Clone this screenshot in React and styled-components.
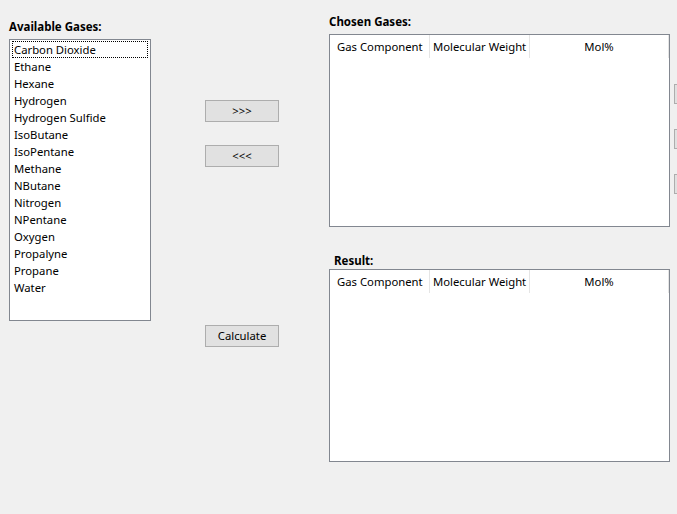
import React from 'react';
import styled, { createGlobalStyle } from 'styled-components';

const GlobalStyle = createGlobalStyle`
  html, body {
    margin: 0;
    padding: 0;
    background: #f0f0f0;
  }
  body {
    font-family: 'Noto Sans', 'Liberation Sans', sans-serif;
    font-size: 11.3px;
    color: #000;
  }
`;

const Window = styled.div`
  width: 677px;
  height: 514px;
  overflow: hidden;
  display: flex;
  align-items: flex-start;
  background: #f0f0f0;
`;

const LeftColumn = styled.div`
  display: flex;
  flex-direction: column;
  padding: 19px 0 0 9px;
  width: 142px;
  flex-shrink: 0;
`;

const MiddleColumn = styled.div`
  display: flex;
  flex-direction: column;
  margin-left: 54px;
  padding-top: 100px;
  width: 74px;
  flex-shrink: 0;
`;

const RightColumn = styled.div`
  display: flex;
  flex-direction: column;
  margin-left: 50px;
  padding-top: 14px;
  flex-shrink: 0;
`;

const Label = styled.div`
  font-weight: bold;
  font-size: 11.5px;
  height: 15px;
  line-height: 15px;
  margin-left: ${({ indent }) => indent || 0}px;
  margin-bottom: ${({ gap }) => gap || 5}px;
  white-space: nowrap;
`;

const ListBox = styled.div`
  box-sizing: border-box;
  width: 142px;
  height: 282px;
  background: #fff;
  border: 1px solid #828790;
  padding: 1px 2px;
`;

const ListItem = styled.div`
  box-sizing: border-box;
  height: 17px;
  line-height: 16px;
  padding-left: 1px;
  white-space: nowrap;
  border: 1px dotted ${({ focused }) => (focused ? '#000' : 'transparent')};
`;

const Button = styled.button`
  box-sizing: border-box;
  width: 74px;
  height: 22px;
  margin: 0 0 ${({ after }) => after || 0}px 0;
  padding: 0;
  background: #e1e1e1;
  border: 1px solid #adadad;
  border-radius: 0;
  font-family: 'Noto Sans', 'Liberation Sans', sans-serif;
  font-size: 11.3px;
  color: #000;
  line-height: 20px;
`;

const ViewRow = styled.div`
  display: flex;
  align-items: flex-start;
  gap: 4px;
`;

const ListView = styled.div`
  box-sizing: border-box;
  width: 341px;
  height: 193px;
  background: #fff;
  border: 1px solid #828790;
  flex-shrink: 0;
`;

const Header = styled.div`
  display: flex;
  height: 23px;
`;

const HeaderCell = styled.div`
  box-sizing: border-box;
  width: ${({ w }) => w}px;
  height: 23px;
  line-height: 23px;
  padding-left: ${({ pad }) => pad}px;
  text-align: ${({ center }) => (center ? 'center' : 'left')};
  border-right: 1px solid #e5e5e5;
  white-space: nowrap;
  overflow: hidden;
`;

const SideButtons = styled.div`
  display: flex;
  flex-direction: column;
  gap: 25px;
  padding-top: 50px;
`;

const SideButton = styled.div`
  box-sizing: border-box;
  width: 75px;
  height: 20px;
  background: #e1e1e1;
  border: 1px solid #adadad;
  flex-shrink: 0;
`;

const Spacer = styled.div`
  height: ${({ h }) => h}px;
`;

const gases = [
  'Carbon Dioxide',
  'Ethane',
  'Hexane',
  'Hydrogen',
  'Hydrogen Sulfide',
  'IsoButane',
  'IsoPentane',
  'Methane',
  'NButane',
  'Nitrogen',
  'NPentane',
  'Oxygen',
  'Propalyne',
  'Propane',
  'Water',
];

const columns = [
  { title: 'Gas Component', w: 100, pad: 7 },
  { title: 'Molecular Weight', w: 100, pad: 3 },
  { title: 'Mol%', w: 139, center: true, pad: 0 },
];

const GasTable = () => (
  <ListView>
    <Header>
      {columns.map((c) => (
        <HeaderCell key={c.title} w={c.w} pad={c.pad} center={c.center}>
          {c.title}
        </HeaderCell>
      ))}
    </Header>
  </ListView>
);

const App = () => (
  <>
    <GlobalStyle />
    <Window>
      <LeftColumn>
        <Label>Available Gases:</Label>
        <ListBox>
          {gases.map((g, i) => (
            <ListItem key={g} focused={i === 0}>
              {g}
            </ListItem>
          ))}
        </ListBox>
      </LeftColumn>

      <MiddleColumn>
        <Button after={23}>&gt;&gt;&gt;</Button>
        <Button after={158}>&lt;&lt;&lt;</Button>
        <Button>Calculate</Button>
      </MiddleColumn>

      <RightColumn>
        <Label>Chosen Gases:</Label>
        <ViewRow>
          <GasTable />
          <SideButtons>
            <SideButton />
            <SideButton />
            <SideButton />
          </SideButtons>
        </ViewRow>
        <Spacer h={26} />
        <Label indent={5} gap={1}>
          Result:
        </Label>
        <GasTable />
      </RightColumn>
    </Window>
  </>
);

export default App;
